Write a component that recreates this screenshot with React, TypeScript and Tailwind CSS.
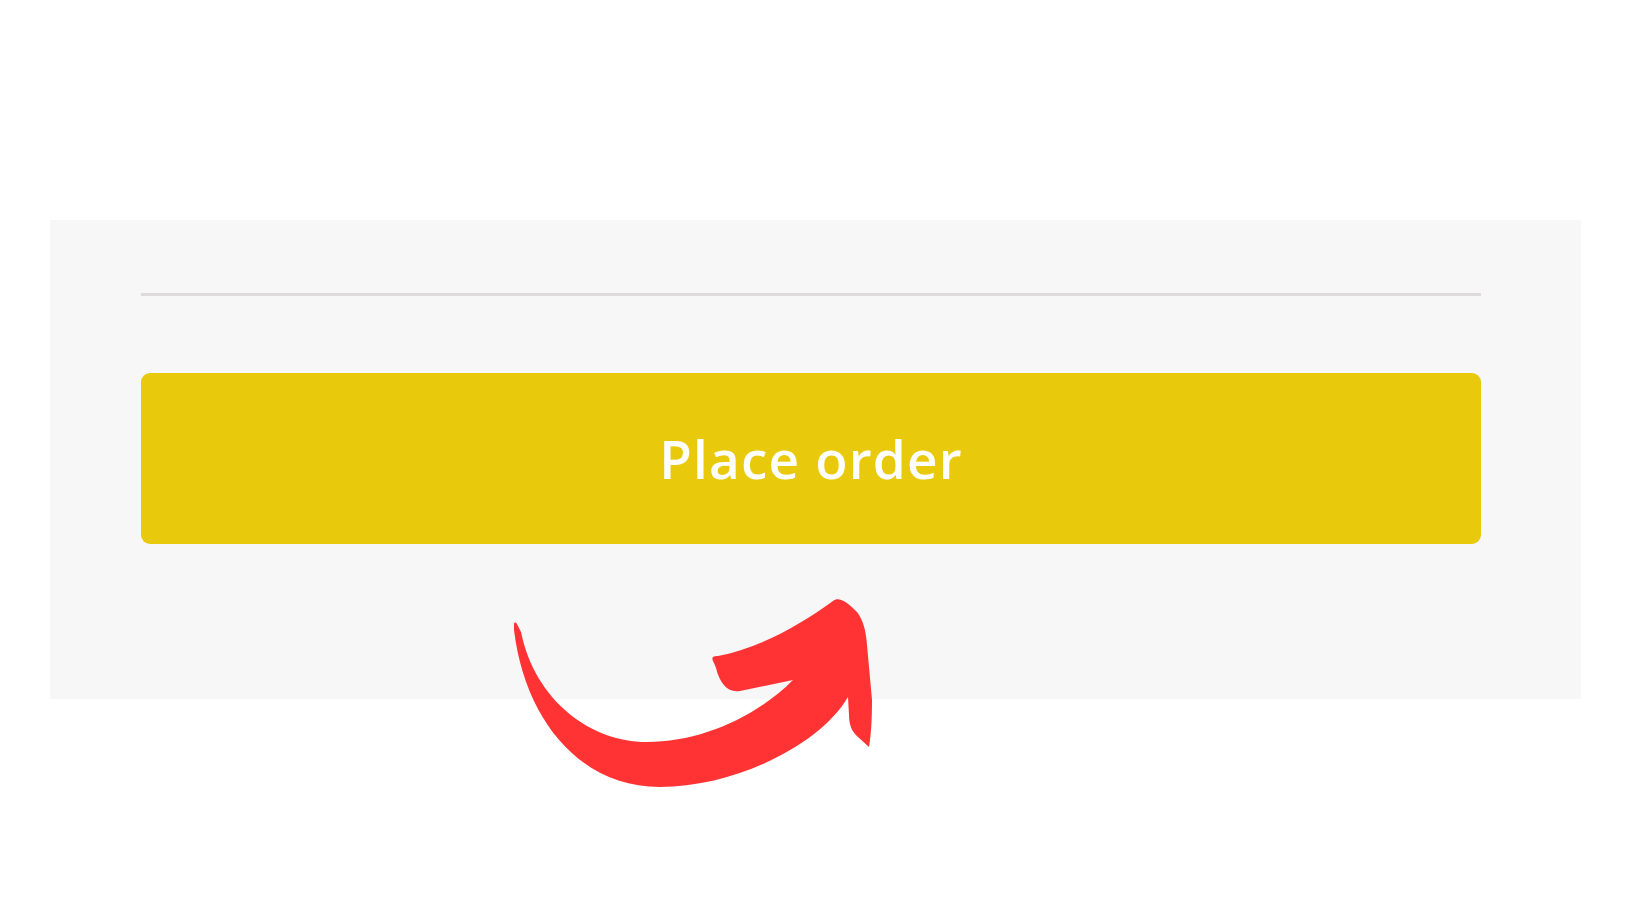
export default function App() {
  return (
    <div className="relative h-[924px] w-[1640px] overflow-hidden bg-white" style={{ fontFamily: "'Open Sans', Lato, sans-serif" }}>
      <div className="ml-[50px] mt-[220px] h-[479px] w-[1531px] bg-[#f7f7f7] pl-[91px] pr-[100px] pt-[73px]">
        <div className="h-[3px] w-full bg-[#dcdadb]" />
        <button className="mt-[77px] flex h-[171px] w-full items-center justify-center rounded-[9px] bg-[#e9c90b] text-[53px] font-semibold tracking-[1.2px] text-white">
          Place order
        </button>
      </div>

      <svg className="absolute left-0 top-0" width="1640" height="924" viewBox="0 0 1640 924">
        <path
          fill="#ff3333"
          d="M 514 624 C 514 622, 516 622, 517 624 L 521 632 C 535 700, 590 742, 647 742 C 700 742, 755 718, 793 680 L 740 691 C 728 693, 720 684, 716 668 C 714 662, 711 659, 713 657 C 714 656, 716 656, 718 656 C 760 648, 800 625, 833 601 C 838 597, 845 600, 857 612 C 863 620, 866 630, 867 645 L 872 700 C 872 720, 871 735, 869 747 L 858 737 C 852 732, 849 725, 849 715 L 848 697 C 820 745, 735 787, 660 787 C 580 787, 525 720, 514 630 Z"
        />
      </svg>
    </div>
  );
}
